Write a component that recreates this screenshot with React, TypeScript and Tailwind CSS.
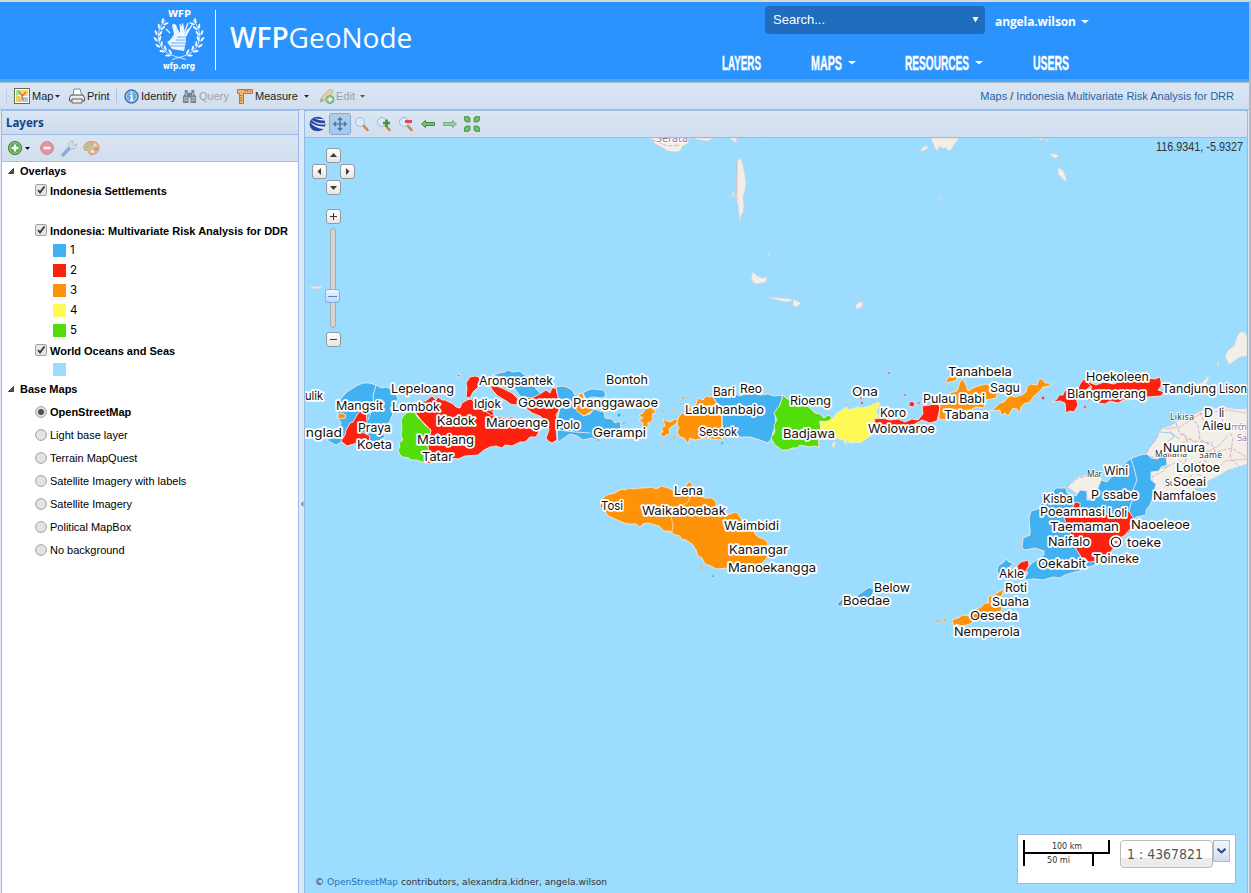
import React from "react";

type Label = [string, number, number, number];

const LABELS: Label[] = [
  ["ulik", 305, 400, 18], ["Mangsit", 336, 410, 47], ["anglad", 298, 437, 44], ["Lepeloang", 391, 393, 63],
  ["Lombok", 392, 411, 48], ["Kadok", 437, 425, 38], ["Matajang", 417, 444, 57], ["Tatar", 422, 461, 31],
  ["Praya", 358, 432, 33], ["Koeta", 357, 449, 35], ["Arongsantek", 479, 385, 74], ["Idjok", 474, 408, 27],
  ["Maroenge", 486, 427, 62], ["Polo", 556, 429, 24], ["Goewoe", 518, 407, 52], ["Pranggawaoe", 573, 407, 85],
  ["Bontoh", 606, 384, 42], ["Gerampi", 593, 437, 53], ["Bari", 713, 396, 22], ["Reo", 740, 393, 22],
  ["Labuhanbajo", 685, 414, 79], ["Sessok", 699, 436, 38], ["Rioeng", 790, 405, 41], ["Ona", 852, 396, 26],
  ["Badjawa", 783, 438, 52], ["Koro", 880, 417, 26], ["Wolowaroe", 868, 433, 67], ["Tanahbela", 948, 376, 64],
  ["Sagu", 990, 392, 30], ["Pulau Babi", 923, 403, 62], ["Tabana", 944, 419, 45], ["Hoekoleen", 1086, 381, 63],
  ["Blangmerang", 1067, 398, 79], ["Tandjung", 1162, 393, 54], ["Lison", 1219, 393, 28], ["D", 1204, 417, 9],
  ["li", 1219, 417, 5], ["Aileu", 1202, 430, 29], ["Nunura", 1163, 452, 42], ["Wini", 1104, 475, 24],
  ["Lolotoe", 1176, 472, 44], ["Soeai", 1173, 486, 33], ["Namfaloes", 1153, 500, 63], ["P", 1091, 499, 8],
  ["ssabe", 1103, 499, 35], ["Kisba", 1043, 503, 30], ["Poeamnasi", 1040, 516, 65], ["Loli", 1108, 517, 19],
  ["Taemaman", 1050, 531, 69], ["Naoeleoe", 1131, 529, 59], ["Naifalo", 1048, 546, 42], ["toeke", 1127, 547, 34],
  ["Toineke", 1093, 563, 46], ["Oekabit", 1038, 568, 48], ["Akle", 999, 578, 25], ["Roti", 1005, 592, 22],
  ["Suaha", 992, 606, 37], ["Oeseda", 970, 620, 48], ["Nemperola", 954, 636, 66], ["Tosi", 601, 510, 22],
  ["Lena", 674, 495, 29], ["Waikaboebak", 642, 515, 84], ["Waimbidi", 724, 530, 55], ["Kanangar", 729, 554, 59],
  ["Manoekangga", 728, 572, 88], ["Below", 874, 592, 36], ["Boedae", 843, 605, 47],
];

const BLUE = "#42b1f2";
const RED = "#fd2210";
const ORANGE = "#fe9208";
const YELLOW = "#fef957";
const GREEN = "#53dd0a";

const REGIONS: [string, string][] = [
  [BLUE, "338,402 341,399 343,396 347,392 353,388 358,385 363,383 370,383 376,385 382,388 386,387 391,389 398,398 396,402 390,408 393,414 389,423 386,428 383,433 385,437 380,440 374,445 368,442 356,443 347,446 341,442 336,445 332,443 327,440 331,437 336,437 340,430 341,422 337,418 338,411"],
  [ORANGE, "338,414 342,413 346,415 345,418 342,419 338,418"],
  [RED, "357,415 361,410 366,411 367,422 362,432 370,436 369,442 363,446 357,443 347,446 341,441 345,435 346,430 350,423 353,422"],
  [GREEN, "408,412 412,411 415,413 418,418 421,420 425,425 431,430 429,440 428,447 431,453 431,458 425,463 417,460 411,460 409,458 403,457 400,455 398,450 400,447 399,443 403,440 401,436 402,427 401,420 404,415"],
  [RED, "415,412 420,405 427,400 432,396 436,400 438,397 442,400 445,400 453,404 456,407 460,408 462,403 467,400 471,399 475,403 483,406 492,402 494,416 505,418 512,417 520,420 529,419 538,424 541,428 536,437 530,437 525,442 520,442 512,446 505,445 502,448 496,446 490,447 484,450 478,455 465,456 458,459 450,458 440,460 431,463 425,464 431,458 428,447 431,430 421,420"],
  [RED, "466,383 470,377 475,376 479,377 480,381 478,387 475,390 473,392 470,398 466,397 467,388"],
  [RED, "456,376 460,374 460,376 457,377"],
  [BLUE, "492,375 499,373 505,372 508,370 513,372 520,371 523,374 527,376 532,376 533,384 537,390 541,394 535,399 527,399 520,396 515,389 510,386 502,382 500,377"],
  [RED, "490,386 496,386 502,388 508,391 512,393 517,398 522,401 516,405 510,404 508,402 498,396 493,391"],
  [RED, "517,402 524,397 532,398 540,394 546,390 550,393 552,388 556,388 557,393 560,394 560,402 556,404 559,410 556,415 558,422 556,425 557,440 552,443 548,441 546,438 549,430 548,423 540,416 532,413 526,408"],
  [RED, "485,411 490,410 494,413 492,416 488,413"],
  [BLUE, "556,387 562,386 567,387 572,390 576,397 574,402 580,411 583,416 590,414 594,409 600,411 604,412 605,418 612,419 615,423 620,421 621,428 617,432 610,434 596,440 592,438 583,440 577,436 570,434 558,442 557,430 558,417 560,408"],
  [BLUE, "583,393 588,390 592,389 604,390 606,396 602,398 592,397 586,399"],
  [ORANGE, "573,405 577,402 579,394 582,393 585,400 588,404 595,406 593,410 584,416 578,412"],
  [ORANGE, "639,415 643,413 645,409 650,407 653,409 656,413 652,414 653,419 650,423 648,422 648,427 645,432 642,428 643,423 639,420 643,418"],
  [ORANGE, "663,419 667,421 670,422 675,419 678,420 676,424 671,427 669,429 670,434 666,435 664,437 660,435 663,431 661,428 665,426"],
  [ORANGE, "678,418 682,413 685,413 690,407 696,404 698,398 703,400 706,396 710,397 713,396 716,402 722,410 722,440 712,439 705,438 695,440 690,438 688,444 684,438 680,437 677,432 679,428 677,424"],
  [BLUE, "712,396 722,394 734,393 740,396 750,392 760,395 768,394 774,396 782,395 782,400 780,405 775,413 776,425 773,432 772,438 768,443 760,440 750,437 740,437 724,435 722,422 722,410"],
  [GREEN, "783,395 786,398 790,400 800,403 806,405 812,410 815,413 820,414 824,418 828,415 832,417 830,421 820,422 821,430 818,436 819,447 814,446 810,447 800,445 797,448 792,448 788,450 782,450 778,447 775,445 771,438 775,432 774,425 777,420 774,413 780,405"],
  [YELLOW, "820,421 826,422 832,419 838,412 843,410 846,407 850,410 857,407 862,408 870,406 878,402 880,404 876,412 879,416 875,420 878,427 872,435 866,439 860,443 855,442 850,443 846,440 846,445 844,440 836,438 831,434 826,433 821,429"],
  [YELLOW, "833,443 835,442 834,447 832,446"],
  [RED, "874,419 882,418 890,420 898,419 905,422 912,419 918,420 923,414 922,406 930,405 938,403 940,408 937,421 930,423 922,420 915,424 904,428 890,428 876,426"],
  [RED, "909,403 912,401 915,404 913,407 909,406"],
  [ORANGE, "946,381 950,375 956,375 957,380 950,382 947,383"],
  [ORANGE, "940,405 948,401 950,393 957,391 960,382 963,379 966,385 968,391 973,388 978,386 986,384 992,387 997,394 996,398 986,400 984,408 976,407 970,410 965,410 962,413 955,409 949,411 945,420 939,419"],
  [ORANGE, "990,411 995,408 1000,403 1004,402 1010,395 1015,397 1022,395 1026,392 1027,387 1030,384 1037,385 1039,379 1042,379 1045,383 1051,383 1049,386 1043,387 1040,391 1033,397 1030,402 1024,404 1021,407 1020,413 1017,409 1013,408 1008,416 1005,413 1001,415 1000,410"],
  [RED, "1052,402 1057,399 1059,395 1063,395 1065,390 1072,391 1078,389 1080,384 1083,380 1090,378 1092,385 1086,390 1082,395 1076,398 1078,405 1074,412 1070,411 1066,413 1065,403 1060,401"],
  [RED, "1086,381 1096,385 1104,382 1114,384 1120,381 1140,380 1148,378 1155,379 1160,377 1162,385 1158,390 1164,392 1161,396 1148,397 1138,397 1130,400 1123,400 1118,403 1110,401 1105,404 1098,403 1102,398 1096,392 1088,393 1092,387"],
  [ORANGE, "600,507 601,501 606,495 611,494 615,493 618,491 622,489 625,490 629,488 633,489 640,488 645,488 652,487 656,489 662,486 668,488 675,491 684,489 687,484 690,481 692,485 694,487 698,495 705,498 712,498 716,502 716,507 724,515 730,514 736,512 739,515 741,519 747,524 752,528 755,534 758,537 764,539 768,543 767,548 769,551 767,558 763,562 756,567 748,571 743,570 738,575 734,570 728,568 716,569 711,566 705,564 702,558 698,556 696,550 692,544 686,540 681,539 680,536 675,535 670,531 664,531 659,526 655,525 648,523 643,524 640,527 636,524 628,524 624,523 615,519 608,516 605,511"],
  [BLUE, "1107,482 1112,476 1118,468 1124,464 1130,459 1140,455 1147,454 1151,458 1158,459 1162,454 1166,455 1167,465 1161,467 1159,471 1151,472 1151,480 1156,484 1154,492 1152,500 1150,505 1146,510 1146,515 1136,517 1130,532 1120,540 1110,555 1095,565 1088,567 1080,571 1075,572 1065,575 1060,578 1053,577 1043,580 1034,579 1024,580 1028,572 1024,572 1032,563 1040,558 1044,555 1044,551 1035,548 1025,550 1022,548 1023,538 1030,535 1030,529 1029,518 1031,511 1038,509 1042,503 1046,500 1050,495 1056,488 1066,488 1067,493 1076,496 1080,490 1087,491 1087,500 1093,500 1098,488 1101,480"],
  [RED, "1064,518 1066,511 1073,507 1075,502 1080,503 1080,508 1090,514 1105,514 1120,514 1129,511 1132,516 1134,518 1130,523 1131,528 1125,535 1118,539 1116,545 1108,555 1106,560 1090,562 1082,561 1080,555 1076,549 1074,540 1070,533"],
  [BLUE, "997,572 998,566 1004,562 1006,559 1009,562 1013,563 1010,567 1005,570 1001,577"],
  [RED, "1017,566 1021,562 1028,560 1029,565 1027,569 1024,573 1018,570"],
  [ORANGE, "952,620 958,618 963,615 970,616 975,610 981,607 985,603 989,603 988,597 995,594 1004,589 1002,595 996,601 1005,603 1000,612 988,617 975,620 970,624 962,626 956,624 954,627"],
  [BLUE, "837,604 842,599 850,597 856,596 865,590 870,587 874,590 870,600 855,603 843,606 838,606"],
];

const LAND: string[] = [
  "649,138 688,138 688,143 682,147 680,151 675,152 668,151 663,148 655,144 653,140",
  "693,138 713,138 708,141 700,140", "729,138 736,138 737,143 733,141",
  "737,162 740,158 742,162 744,170 746,183 745,190 743,197 744,205 743,213 741,215 740,224 739,215 738,205 736,200 737,175",
  "732,195 734,190 734,198", "767,252 769,254 769,258",
  "751,278 753,272 757,276 762,278 767,277 766,282 757,284 753,282", "768,297 780,298 791,299 792,301 785,302 770,298",
  "793,299 801,303 796,307 793,306", "855,306 859,302 863,302 862,307 857,309", "854,296 857,295 857,297",
  "920,151 923,147 927,145 928,148 924,151", "931,138 959,138 954,145 951,150 948,151 946,147 943,149 940,146 937,151 935,148",
  "1038,138 1042,138 1043,141", "1045,138 1049,141 1046,141", "1050,154 1056,154 1059,157 1054,158",
  "1058,168 1063,170 1065,175 1067,182 1064,180 1058,174", "309,285 315,287 322,286 321,288 314,289", "939,197 943,198 941,199",
  "1227,360 1225,357 1228,350 1234,346 1237,337 1240,332 1244,332 1247,336 1247,356 1240,357 1234,361 1229,365",
  "1217,362 1219,361 1218,367", "1194,384 1202,383 1209,375 1208,381 1204,386 1196,386",
  "1145,456 1150,447 1155,441 1158,436 1160,431 1163,428 1170,426 1178,421 1190,417 1200,411 1210,409 1225,407 1235,409 1247,409 1247,464 1235,468 1228,470 1220,475 1210,480 1205,483 1194,489 1185,495 1175,500 1163,502 1156,498 1151,480 1151,472 1167,467 1166,455 1158,459 1151,458",
  "1067,487 1073,481 1078,477 1090,474 1100,473 1102,480 1096,491 1088,500 1086,492 1077,494 1072,490",
];

const MapDrawing = () => (
  <svg viewBox="305 138 942 755" className="absolute inset-0 h-full w-full">
    <g fill="#f2efe9" stroke="#d9cfd6" strokeWidth=".6">
      {LAND.map((p, i) => <polygon key={i} points={p} />)}
    </g>
    <g fill="none" stroke="#d3a7cb" strokeWidth=".9" strokeDasharray="4 1.5">
      <path d="M1158 436L1148 449 1146 456 1160 458 1168 466 1162 472 1152 477 1153 487 1158 495M1067 487L1078 478 1100 474M1082 492L1087 500M1190 417L1198 425 1200 440 1213 446 1215 452 1232 448 1246 457" />
      <path d="M1168 466L1180 461 1188 466 1205 461 1214 466M1176 423L1180 434 1194 441 1213 443M1183 433L1189 445 1185 462M1225 408L1222 420 1233 438 1230 458 1240 467M1164 487L1177 478 1185 470M653 140L667 146 680 145M1200 412L1205 425 1225 427" />
    </g>
    <g fill="none" stroke="#e9b0ad" strokeWidth=".8">
      <path d="M1165 429L1180 427 1200 414 1227 410 1246 413M1178 445L1190 439 1207 452 1220 445 1228 435M1169 451L1177 445 1182 452M1216 470L1225 461 1247 459M1188 480L1194 472 1205 478M737 162V202" />
      <path stroke="#8dbce4" d="M1160 432L1171 433 1180 439M1170 431L1174 437 1167 442" />
    </g>
    <g stroke="#f5e9dc" strokeWidth=".9" strokeLinejoin="round">
      {REGIONS.map(([c, p], i) => <polygon key={i} fill={c} points={p} />)}
    </g>
    <g fill="none" stroke="#e4eef2" strokeWidth=".9">
      <path d="M376 385L373 396 374 404 371 412 368 420M1131 459L1134 468 1137 480 1133 490 1132 500 1129 511M722 410V435" />
      <path d="M690 497L688 502 682 506 676 511 671 517 673 525 672 532 667 532" stroke="#fcd9a1" />
      <path d="M558 430L575 432 590 433M574 402L583 399" />
    </g>
    <g fill={ORANGE} stroke="#f8dfb4" strokeWidth=".5">
      <circle cx="683" cy="398" r="1.3" /><circle cx="674" cy="437" r="1.2" /><circle cx="663" cy="411" r="1" /><circle cx="673" cy="410" r="1" /><circle cx="680" cy="404" r="1" />
      <circle cx="702" cy="568" r="1.3" /><circle cx="938" cy="621" r="1.3" /><circle cx="945" cy="620" r="1.2" /><circle cx="942" cy="623" r=".8" /><circle cx="663" cy="444" r="1" />
    </g>
    <g fill={RED} stroke="#f7c5c5" strokeWidth=".5">
      <circle cx="905" cy="395" r="1" /><circle cx="889" cy="373" r="1" /><circle cx="861" cy="398" r="1" /><circle cx="862" cy="403" r="1.2" /><circle cx="424" cy="402" r="1" />
      <circle cx="919" cy="403" r="1" /><circle cx="1043" cy="398" r="1.5" /><circle cx="1085" cy="407" r="1.2" /><circle cx="1089" cy="399" r="1.4" />
    </g>
    <g fill={BLUE} stroke="#c5e7f8" strokeWidth=".5">
      <circle cx="619" cy="415" r="2" /><circle cx="624" cy="423" r="1.2" /><circle cx="722" cy="443" r="1.5" /><circle cx="598" cy="440" r="1.3" />
    </g>
    <circle cx="713" cy="576" r=".6" fill="#222" />
    <g fontFamily='"Noto Sans", sans-serif' fontSize="8.5" fill="#333" stroke="#fff" strokeWidth="1.5" paintOrder="stroke">
      <text x="1170" y="420" textLength="24">Likisa</text><text x="1155" y="457" textLength="32">Maliana</text>
      <text x="1199" y="458" textLength="23">Same</text><text x="1087" y="477" textLength="15">Mar</text><text x="1165" y="486">Su</text>
      <g fill="#9e72ad" fontSize="9.5"><text x="1231" y="430" textLength="16">món</text><text x="1237" y="441" textLength="10">Sa</text><text x="656" y="142" fontSize="10.5" textLength="32" lengthAdjust="spacingAndGlyphs">Serata</text></g>
    </g>
    <circle cx="1116" cy="542" r="7" fill="#fff" />
    <circle cx="1116" cy="542" r="4.7" fill="#fff" stroke="#111" strokeWidth="1.1" />
    <circle cx="1116" cy="542" r="1.6" fill="#f2694f" />
    <g fontFamily='"Inter", "Liberation Sans", sans-serif' fontSize="12.2" fill="#111" stroke="#fff" strokeWidth="3.6" strokeLinejoin="round" paintOrder="stroke">
      {LABELS.map(([t, x, y, w]) => (
        <text key={t} x={x} y={y} textLength={w} lengthAdjust="spacingAndGlyphs">{t}</text>
      ))}
    </g>
    <circle cx="975.5" cy="615.7" r="2" fill={ORANGE} />
  </svg>
);

const Emblem = () => (
  <svg width="52" height="62" viewBox="153 9 52 62" fill="#fff">
    <text x="168" y="16.5" fontSize="9" fontWeight="700" fontFamily='"DejaVu Sans", sans-serif' textLength="23" lengthAdjust="spacingAndGlyphs">WFP</text>
    <text x="163" y="68.5" fontSize="8" fontWeight="700" fontFamily='"DejaVu Sans", sans-serif' textLength="32" lengthAdjust="spacingAndGlyphs">wfp.org</text>
    {[false, true].map((m) => (
      <g key={String(m)} transform={m ? "translate(358 0) scale(-1 1)" : undefined}>
        <path d="M165 20Q156 31 159 42Q163 53 174 56L186 59.5" fill="none" stroke="#fff" strokeWidth=".8" />
        {[[164, 22, 40], [160.5, 27, 22], [158, 33, 5], [157.5, 39, -12], [159.5, 45, -30], [163.5, 50, -48], [169, 54, -62]].map(([x, y, r]) => (
          <g key={y} transform={`translate(${x} ${y}) rotate(${r})`}>
            <ellipse cx="-1.6" cy="-1" rx="1" ry="2.8" transform="rotate(-28)" />
            <ellipse cx="2.3" cy="-1.2" rx="1" ry="2.8" transform="rotate(28)" />
          </g>
        ))}
      </g>
    ))}
    <path d="M172 25Q176 22 177 28L180 33Q181 24 183 23Q185 29 184 35Q187 28 191 27L186 37V42L184 51L172 49L167 42Q172 39 174 34Z" opacity=".9" />
    <path d="M183 36L188 23M184 38L192 25M181 35L180 24M170 33L166 29" stroke="#fff" strokeWidth="1.1" />
    <path d="M171 43H186M170 46H186M176 40H186M177 37H186" stroke="#2a93fe" strokeWidth=".7" />
  </svg>
);

const Caret = ({ className = "" }: { className?: string }) => (
  <svg width="6" height="4" viewBox="0 0 6 4" preserveAspectRatio="none" className={"shrink-0 " + className}><path d="M0 0H6L3 3.5Z" fill="currentColor" /></svg>
);

const NavItem = ({ text, width, cls, caret }: { text: string; width: number; cls: string; caret?: boolean }) => (
  <div className={"flex items-center " + cls}>
    <svg width={width + 6} height="22"><text x="0" y="18" textLength={width} lengthAdjust="spacingAndGlyphs" fontFamily='"Liberation Sans Narrow", "Liberation Sans", sans-serif' fontWeight="700" fontSize="19.5" fill="#fff" stroke="#fff" strokeWidth=".35">{text}</text></svg>
    {caret && <Caret className="h-[4px] w-2 text-white" />}
  </div>
);

const Magnifier = ({ sign }: { sign?: "plus" | "minus" }) => (
  <svg width="16" height="16" viewBox="0 0 16 16">
    <path d="M9 9L13.5 14" stroke="#c98a48" strokeWidth="2.6" strokeLinecap="round" />
    <circle cx="6" cy="6" r="4.5" fill="#d8eafa" stroke="#9fbbd8" />
    {sign === "plus" && <path d="M10.5 3.5V10.5M7 7H14" stroke="#3f9438" strokeWidth="2.6" />}
    {sign === "minus" && <path d="M7 5.5H14" stroke="#e24b4f" strokeWidth="3" />}
  </svg>
);

const GreenArrow = ({ flip }: { flip?: boolean }) => (
  <svg width="16" height="16" viewBox="0 0 16 16" className={flip ? "-scale-x-100 opacity-60" : ""}>
    <path d="M1.5 8L5.5 4.5V6.5H14.5V9.5H5.5V11.5Z" fill="#79c267" stroke="#397f34" strokeWidth=".9" />
  </svg>
);

const Check = ({ text }: { text: string }) => (
  <div className="flex h-5 items-center pl-[33px] font-bold">
    <svg width="12" height="12" viewBox="0 0 12 12" className="mr-[3px] mb-[2px]">
      <rect x=".5" y=".5" width="11" height="11" rx="1.5" fill="#e6e6e6" stroke="#a0a0a0" />
      <path d="M3 6L5 8.5L9.5 2.5" fill="none" stroke="#3c3c3c" strokeWidth="1.9" />
    </svg>
    {text}
  </div>
);

const Swatch = ({ n, color }: { n: string; color: string }) => (
  <div className="flex h-5 items-center pl-[51px] font-['Inter'] text-[11.5px]">
    <span className={"mr-[4px] mb-[2px] h-[13px] w-[13px] " + color} />{n}
  </div>
);

const Group = ({ text }: { text: string }) => (
  <div className="flex h-[18px] items-center pl-[6px] font-bold">
    <svg width="6" height="6" viewBox="0 0 6 6" className="mr-[6px]"><path d="M5.5 .5V5.5H.5Z" fill="#555" stroke="#222" strokeWidth=".8" /></svg>
    {text}
  </div>
);

const BASE_LAYERS = ["OpenStreetMap", "Light base layer", "Terrain MapQuest", "Satellite Imagery with labels", "Satellite Imagery", "Political MapBox", "No background"];

const MapButton = ({ d, cls }: { d: string; cls: string }) => (
  <div className={"absolute h-[15px] w-[15px] rounded-[3px] border border-[#929a9f] bg-linear-to-b from-white to-[#e6e6e6] " + cls}>
    <svg width="13" height="13" viewBox="0 0 13 13"><path d={d} fill="#3c3c3c" /></svg>
  </div>
);

export default function App() {
  return (
    <div className="flex h-[893px] w-[1251px] flex-col overflow-hidden border-t-2 border-r-2 border-t-[#d8d8d8] border-r-[#b4bac4] bg-[#dfe8f6] font-['Liberation_Sans',sans-serif] text-[11px] whitespace-nowrap text-black">
      <header className="flex h-[80px] shrink-0 border-b-[3px] border-[#4caaf2] bg-[#2a93fe]">
        <div className="flex pt-[7px] pl-[153px]">
          <Emblem />
          <div className="mt-px ml-[10px] h-[60px] w-px bg-white" />
          <div className="pl-[14px] font-['Open_Sans'] text-[28px] leading-[56px] text-white"><span className="font-semibold">WFP</span>GeoNode</div>
        </div>
        <div className="ml-auto flex w-[527px] flex-col">
          <div className="flex pt-[4px] pl-[43px]">
            <div className="flex h-[28px] w-[220px] items-center justify-between rounded-[4px] bg-[#206dbd] pr-[6px] pl-[8px] text-[13px] text-white">
              <span>Search...</span>
              <svg width="7" height="6" viewBox="0 0 7 6"><path d="M.5 0H6.5L3.5 5.5Z" fill="#fff" /></svg>
            </div>
            <div className="ml-[10px] flex items-center pt-[3px] font-['Open_Sans'] text-[12px] font-bold text-white">
              <svg width="86" height="18"><text x="0" y="13" textLength="81" fontSize="12" fill="#fff">angela.wilson</text></svg>
              <Caret className="h-[4px] w-2" />
            </div>
          </div>
          <div className="flex pt-[18px]">
            <NavItem text="LAYERS" width={39} cls="w-[41px]" />
            <NavItem text="MAPS" width={31} cls="ml-[48px] w-[45px]" caret />
            <NavItem text="RESOURCES" width={64} cls="ml-[49px] w-[79px]" caret />
            <NavItem text="USERS" width={36} cls="ml-[49px] w-[44px]" />
          </div>
        </div>
      </header>

      <div className="flex h-[28px] shrink-0 items-center border-t border-b border-[#99bbe8] border-t-[#a9bfd8] bg-linear-to-b from-[#dce6f3] to-[#d0deef] pl-[6px] text-[#222]">
        <span className="h-3.5 w-px bg-[#b7cdea]" />
        <svg width="16" height="16" viewBox="0 0 16 16" className="ml-[7px]"><rect x=".5" y=".5" width="15" height="15" fill="#fff" stroke="#666b58" /><path d="M2 2H6V7H2Z" fill="#a8d89a" /><path d="M6 2H14V8H8Z" fill="#f7d96a" /><path d="M2 7L8 9V14H2Z" fill="#e8cf65" /><path d="M9 9H14V14H9Z" fill="#9fcdf2" /><path d="M5 3L8 8L9 13M8 8L12 4" fill="none" stroke="#df5a3a" strokeWidth="1.2" /></svg>
        <span className="ml-[2px] w-[22px]">Map</span><Caret className="ml-px h-[3px] w-[5px]" />
        <svg width="16" height="16" viewBox="0 0 16 16" className="ml-[9px]"><path d="M4 8L5 1H11L13 8Z" fill="#fff" stroke="#6d8db3" /><path d="M2 7H14L15.5 9.5V13H.5V9.5Z" fill="#dcdcdc" stroke="#555" /><path d="M3 11H13V15H3Z" fill="#e8eef5" stroke="#666" /><path d="M2 9H14" stroke="#fff" /></svg>
        <span className="ml-[2px] w-[23px]">Print</span>
        <span className="ml-[6px] h-3.5 w-px bg-[#aac3e4]" />
        <svg width="15" height="15" viewBox="0 0 16 16" className="ml-[7px]"><circle cx="8" cy="8" r="7.2" fill="#4b87c9" stroke="#3265a2" /><circle cx="8" cy="8" r="5.5" fill="#6ea6e0" stroke="#cfe2f6" strokeWidth=".8" /><path d="M8 3.5V5.4M6.5 7H8.2V11.5M6.4 11.8H9.8" stroke="#fff" strokeWidth="1.7" fill="none" /></svg>
        <span className="ml-[2px] w-[35px]">Identify</span>
        <svg width="15" height="15" viewBox="0 0 16 16" className="ml-[6px]" fill="#77828e"><path d="M3 1H6V4H10V1H13V5L15 8V15H9V9H7V15H1V8L3 5Z" /><path d="M2 9.5H6M2 12H6M10 9.5H14M10 12H14M4.5 4V7M11.5 4V7" stroke="#dce3ea" strokeWidth=".9" /></svg>
        <span className="ml-[2px] w-[31px] text-[#9aa1a8]">Query</span>
        <svg width="16" height="16" viewBox="0 0 16 16" className="ml-[7px]"><path d="M.5 1.5H15.5V5.5H6.5V15.5H2.5V5.5H.5Z" fill="#f2b26c" stroke="#c0732c" /><path d="M8 2V4M10.5 2V4M13 2V4M3 7.5H5M3 10H5M3 12.5H5" stroke="#a8602a" strokeWidth=".8" /></svg>
        <span className="ml-[2px] w-[44px]">Measure</span><Caret className="ml-[5px] h-[3px] w-[5px]" />
        <svg width="16" height="16" viewBox="0 0 16 16" className="ml-[10px] opacity-70"><path d="M1 14L2.5 9.5L10.5 1.5Q13 1 14 4.5L6 12Z" fill="#eacb77" stroke="#a69160" strokeWidth=".8" /><path d="M1 14L2.5 10L5.5 12.5Z" fill="#8f9aa5" /><circle cx="11" cy="11.5" r="4" fill="#75b76c" stroke="#4e9147" /><path d="M11 9V14M8.5 11.5H13.5" stroke="#fff" strokeWidth="1.4" /></svg>
        <span className="ml-px w-[19px] text-[#9aa1a8]">Edit</span><Caret className="ml-[5px] h-[3px] w-[5px] text-[#555]" />
        <div className="ml-auto pr-[15px] text-[#1d66a8]">Maps <span className="text-[#333]">/</span> Indonesia Multivariate Risk Analysis for DRR</div>
      </div>

      <main className="flex min-h-0 flex-1">
        <aside className="ml-px flex w-[298px] shrink-0 flex-col border border-b-0 border-[#99bbe8] bg-white">
          <div className="flex h-[24px] items-center border-b border-[#99bbe8] bg-linear-to-b from-[#dae6f4] to-[#cddcee] pl-[4px] font-['Noto_Sans'] text-[11.5px] font-bold text-[#15428b]">Layers</div>
          <div className="flex h-[27px] items-center border-b border-[#a9bfd3] bg-linear-to-b from-[#dae5f3] to-[#d0deef] pl-[5px]">
            <svg width="16" height="16" viewBox="0 0 16 16"><circle cx="8" cy="8" r="6.6" fill="#55a649" stroke="#428a38" /><circle cx="8" cy="8" r="5.3" fill="none" stroke="#b5dcae" strokeWidth=".7" /><path d="M8 4.5V11.5M4.5 8H11.5" stroke="#fff" strokeWidth="2.3" /></svg>
            <Caret className="ml-[2px] h-[3px] w-[5px]" />
            <svg width="16" height="16" viewBox="0 0 16 16" className="ml-[9px] opacity-70"><circle cx="8" cy="8" r="6.4" fill="#e67775" stroke="#d05b5b" /><path d="M4.5 8H11.5" stroke="#fff" strokeWidth="2.5" /></svg>
            <svg width="17" height="17" viewBox="0 0 16 16" className="ml-[6px] opacity-80"><path d="M2 14L8 7.5" stroke="#7d9dd6" strokeWidth="3.4" strokeLinecap="round" /><path d="M14.5 3.5L11.5 5.5L10 4L12 1.2Q8 .5 7.4 4L7.6 7L9.5 8.5L12 8Q15.2 7 14.5 3.5Z" fill="#dce2e9" stroke="#9aa6b5" strokeWidth=".8" /></svg>
            <svg width="17" height="16" viewBox="0 0 17 16" className="ml-[5px] opacity-75"><path d="M8 1.5Q15.5 1 16 7Q16 14 9 14.5Q5 14.5 6 11.5Q6 9.5 3.5 10.5Q.8 10.5 .8 7.5Q1.5 2 8 1.5Z" fill="#e4ad72" stroke="#bd8450" /><circle cx="4.5" cy="6.5" r="1.5" fill="#7db86f" /><circle cx="8" cy="4.2" r="1.5" fill="#76a9dc" /><circle cx="12" cy="5" r="1.5" fill="#f1e280" /><circle cx="13" cy="9" r="1.5" fill="#dc5e55" /><circle cx="9.5" cy="11.5" r="1.3" fill="#fff" /></svg>
          </div>
          <Group text="Overlays" />
          <div className="pt-px">
            <Check text="Indonesia Settlements" />
            <div className="h-5" />
            <Check text="Indonesia: Multivariate Risk Analysis for DDR" />
            <Swatch n="1" color="bg-[#42b1f2]" />
            <Swatch n="2" color="bg-[#fd2210]" />
            <Swatch n="3" color="bg-[#fe9208]" />
            <Swatch n="4" color="bg-[#fef957]" />
            <Swatch n="5" color="bg-[#53dd0a]" />
            <Check text="World Oceans and Seas" />
            <div className="h-[19px] pt-[2px] pl-[51px]"><div className="h-[13px] w-[13px] bg-[#9cdcfe]" /></div>
          </div>
          <Group text="Base Maps" />
          <div className="pt-[3px]">
            {BASE_LAYERS.map((t, i) => (
              <div key={t} className={"flex h-[23px] items-center pl-[33px] " + (i === 0 ? "font-bold" : "")}>
                <svg width="12" height="12" viewBox="0 0 12 12" className="mr-[3px] mb-[2px]"><circle cx="6" cy="6" r="5.4" fill="#e3e3e3" stroke="#a0a0a0" />{i === 0 && <circle cx="6" cy="6" r="3" fill="#505050" />}</svg>
                {t}
              </div>
            ))}
          </div>
        </aside>
        <div className="flex w-[5px] shrink-0 items-center justify-center pt-[5px]">
          <svg width="4" height="6" viewBox="0 0 4 6"><path d="M3.5 0V6L.5 3Z" fill="#7894b8" /></svg>
        </div>
        <section className="flex w-[944px] shrink-0 flex-col border-x border-t border-[#99bbe8]">
          <div className="flex h-[27px] items-center border-b border-[#99bbe8] bg-linear-to-b from-[#dce6f3] to-[#d0deef] pl-[4px]">
            <svg width="17" height="16" viewBox="0 0 17 16"><ellipse cx="8.5" cy="8" rx="8" ry="7.3" fill="#2847a0" /><path d="M.8 6Q8 11 16.2 10.5L15 13Q6 12.5 .8 6ZM2 3.5Q8 8 16.4 7L16.3 8.2Q8 10 2 3.5ZM5 1.5Q9 5 15.5 4.5L14 3Q9 3.5 5 1.5Z" fill="#e9f0fb" /></svg>
            <div className="ml-[3px] flex h-[22px] w-[22px] items-center justify-center rounded-[3px] border border-[#8ba8ce] bg-linear-to-b from-[#b4cce7] to-[#9fc9f2]">
              <svg width="14" height="14" viewBox="0 0 14 14" fill="none" stroke="#3f6aa0"><path d="M7 1V13M1 7H13" strokeWidth="1.2" /><path d="M5 3L7 1L9 3M5 11L7 13L9 11M3 5L1 7L3 9M11 5L13 7L11 9" strokeWidth="1.3" /></svg>
            </div>
            <div className="ml-[3px] flex gap-[6px]">
              <Magnifier /><Magnifier sign="plus" /><Magnifier sign="minus" /><GreenArrow /><GreenArrow flip />
              <svg width="16" height="16" viewBox="0 0 16 16" fill="#5fb054" stroke="#4c9a44" strokeWidth=".8"><path d="M.5 .5H4.5L6 2V6H2L.5 4.5ZM15.5 .5H11.5L10 2V6H14L15.5 4.5ZM.5 15.5H4.5L6 14V10H2L.5 11.5ZM15.5 15.5H11.5L10 14V10H14L15.5 11.5Z" /><path d="M2 2L4.5 4.5M14 2L11.5 4.5M2 14L4.5 11.5M14 14L11.5 11.5" stroke="#d2ecce" /></svg>
            </div>
          </div>
          <div className="relative min-h-0 flex-1 overflow-hidden bg-[#9cdcfe]">
            <MapDrawing />
            <MapButton cls="top-[10px] left-[21px]" d="M3 8H10L6.5 4Z" />
            <MapButton cls="top-[26px] left-[7px]" d="M8 3V10L4.5 6.5Z" />
            <MapButton cls="top-[26px] left-[35px]" d="M5 3V10L8.5 6.5Z" />
            <MapButton cls="top-[42px] left-[21px]" d="M3 5H10L6.5 9Z" />
            <MapButton cls="top-[71px] left-[21px]" d="M3 6H6V3H7V6H10V7H7V10H6V7H3Z" />
            <div className="absolute top-[90px] left-[25px] h-[100px] w-[6px] rounded-[3px] border border-[#aaa] bg-[#d4d4d4]" />
            <div className="absolute top-[151px] left-[20px] flex h-[14px] w-[15px] items-center justify-center rounded-[3px] border border-[#82aee9] bg-linear-to-b from-[#f0f6ff] to-[#bcd6fa]"><div className="h-px w-[9px] bg-[#5c83bd]" /></div>
            <MapButton cls="top-[194px] left-[21px]" d="M3 6H10V7H3Z" />
            <div className="absolute top-[3px] right-[3px] text-[12px] leading-3 text-[#333]"><svg width="88" height="14"><text x="0" y="10" textLength="87" lengthAdjust="spacingAndGlyphs" fill="#333">116.9341, -5.9327</text></svg></div>
            <div className="absolute bottom-[5px] left-[10px]">
              <svg width="294" height="13" fontFamily='"DejaVu Sans", sans-serif' fontSize="9.2"><text x="0" y="9.5" textLength="292" lengthAdjust="spacingAndGlyphs" fill="#333">© <tspan fill="#1d74b8">OpenStreetMap</tspan> contributors, alexandra.kidner, angela.wilson</text></svg>
            </div>
            <div className="absolute top-[696px] left-[712px] flex h-[50px] w-[219px] border border-[#99bbe8] bg-white pt-[5px] pl-[5px]">
              <svg width="88" height="27" fontFamily='"DejaVu Sans Condensed", "DejaVu Sans", sans-serif' fontSize="9" fill="#333"><path d="M1 0V26M0 13H87M86 0V13M70 13V26" fill="none" stroke="#000" strokeWidth="2" /><text x="29" y="9" textLength="30" lengthAdjust="spacingAndGlyphs">100 km</text><text x="24" y="23" textLength="23" lengthAdjust="spacingAndGlyphs">50 mi</text></svg>
              <div className="ml-[9px] flex h-[28px] w-[93px] items-center rounded-[4px] border border-[#bbb] bg-linear-to-b from-white from-65% to-[#ececec] to-65% pl-[6px]">
                <svg width="78" height="20"><text x="0" y="15" textLength="76" lengthAdjust="spacingAndGlyphs" fontFamily='"DejaVu Sans Condensed", "DejaVu Sans", sans-serif' fontSize="13.5" fill="#555">1 : 4367821</text></svg>
              </div>
              <div className="flex h-[22px] w-[17px] items-center justify-center border border-[#b5b8c8] bg-linear-to-b from-[#f4f7fb] to-[#d2ddec]">
                <svg width="9" height="6" viewBox="0 0 9 6"><path d="M.5 .8L4.5 4.5L8.5 .8" fill="none" stroke="#29497f" strokeWidth="2" /></svg>
              </div>
            </div>
          </div>
        </section>
      </main>
    </div>
  );
}
